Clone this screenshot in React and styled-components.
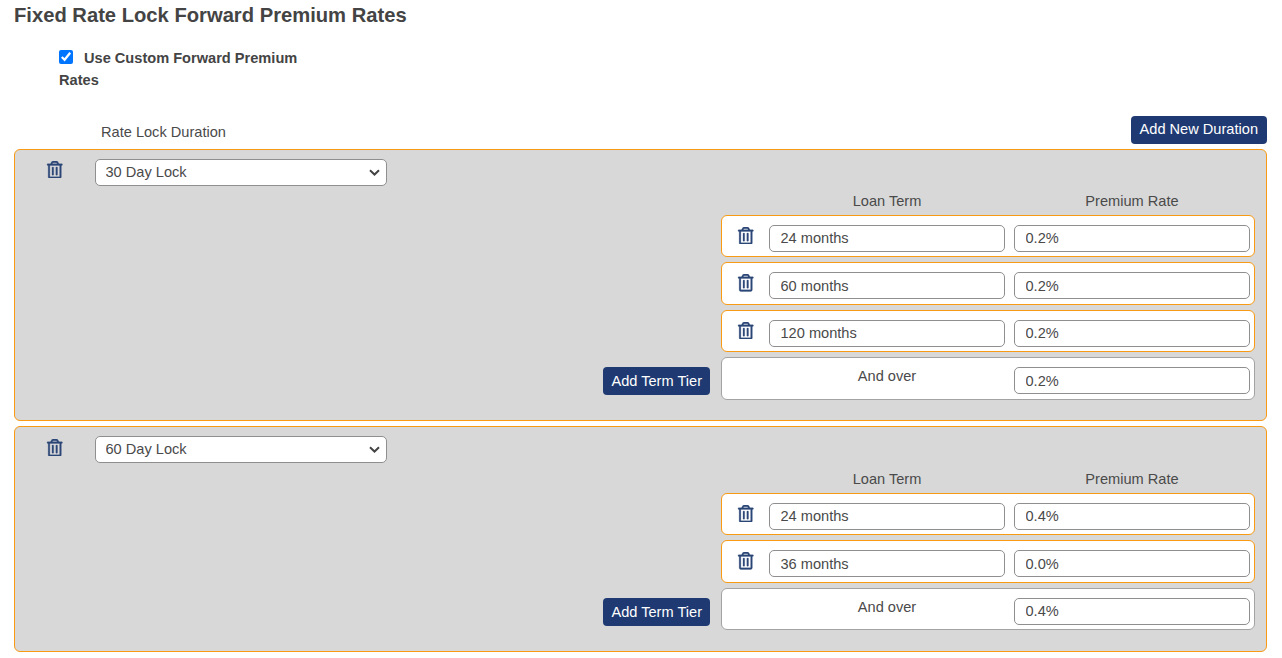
import React from "react";
import styled, { createGlobalStyle } from "styled-components";
import { FaRegTrashAlt } from "react-icons/fa";

const chevron = encodeURIComponent(
  '<svg xmlns="http://www.w3.org/2000/svg" width="11" height="7" viewBox="0 0 11 7"><path d="M1 1.2l4.5 4.3L10 1.2" fill="none" stroke="#444" stroke-width="2"/></svg>'
);

const GlobalStyle = createGlobalStyle`
  html, body {
    margin: 0;
    padding: 0;
    background: #fff;
    font-family: "Liberation Sans", Arial, sans-serif;
    font-size: 14.6px;
    color: #4a4a4a;
  }
`;

const Page = styled.div`
  padding: 0 15px 0 14px;
  height: 658px;
  box-sizing: border-box;
  overflow: hidden;
`;

const Title = styled.h2`
  margin: 0;
  padding-top: 5px;
  font-size: 20.2px;
  line-height: 21px;
  font-weight: bold;
  color: #444;
`;

const CustomLabel = styled.label`
  display: block;
  width: 250px;
  margin: 21px 0 0 45px;
  font-weight: bold;
  line-height: 22px;
  color: #444;
  input {
    width: 14px;
    height: 14px;
    margin: 0 11px 0 0;
    vertical-align: -1px;
  }
`;

const DurationHead = styled.div`
  display: flex;
  justify-content: space-between;
  align-items: flex-end;
  margin: 25px 0 5.4px;
  height: 28px;
  span {
    margin: 0 0 3px 87px;
    line-height: 17px;
  }
`;

const Button = styled.button`
  background: #1f3a72;
  color: #fff;
  border: none;
  border-radius: 4px;
  height: 28px;
  padding: 0 8px;
  font-family: inherit;
  font-size: 14.6px;
  white-space: nowrap;
  cursor: pointer;
`;

const AddDuration = styled(Button)`
  padding: 0 9px 2px;
`;

const Panel = styled.section`
  background: #d8d8d8;
  border: 1px solid #f89a14;
  border-radius: 6px;
  padding: 8.6px 11px 20.5px 0;
  & + & {
    margin-top: 5px;
  }
`;

const LockRow = styled.div`
  display: flex;
  align-items: flex-start;
`;

const Trash = styled.button`
  flex: none;
  height: 27px;
  padding: 2px 0 0;
  border: none;
  background: none;
  color: #2b4777;
  font-size: 17.5px;
  display: flex;
  box-sizing: border-box;
  cursor: pointer;
  svg {
    stroke-width: 8;
  }
`;

const LockTrash = styled(Trash)`
  width: 80px;
  justify-content: center;
  padding-top: ${(p) => p.$top}px;
`;

const LockSelect = styled.select`
  width: 292px;
  height: 27px;
  padding: 0 20px 0 9.5px;
  appearance: none;
  background: #fff url("data:image/svg+xml,${chevron}") no-repeat right 6px center;
  border: 1px solid #8f8f8f;
  border-radius: 5px;
  font-family: inherit;
  font-size: 14.6px;
  color: #4a4a4a;
`;

const TierArea = styled.div`
  display: flex;
  justify-content: flex-end;
  align-items: flex-end;
  gap: 11px;
`;

const TierColumn = styled.div`
  width: 534px;
`;

const TierHead = styled.div`
  display: grid;
  grid-template-columns: 38px 236px 236px;
  column-gap: 9px;
  align-items: end;
  height: ${(p) => p.$height}px;
  line-height: 16px;
  padding: 0 0 6px 1px;
  box-sizing: border-box;
  text-align: center;
  span:first-child {
    grid-column: 2;
  }
`;

const TierRows = styled.div`
  display: flex;
  flex-direction: column;
  gap: 5px;
`;

const TierRow = styled.div`
  display: grid;
  grid-template-columns: 38px 236px 236px;
  column-gap: 9px;
  align-items: start;
  height: 42.5px;
  padding-top: 9px;
  box-sizing: border-box;
  background: #fff;
  border: 1px solid ${(p) => (p.$last ? "#a3a3a3" : "#f89a14")};
  border-radius: 6px;
`;

const OverLabel = styled.div`
  grid-column: 2;
  text-align: center;
  line-height: 17px;
  margin-top: 1px;
`;

const TextField = styled.input`
  width: 236px;
  height: 27px;
  box-sizing: border-box;
  padding: 0 10.5px;
  border: 1px solid #8f8f8f;
  border-radius: 5px;
  background: #fff;
  font-family: inherit;
  font-size: 14.6px;
  color: #4a4a4a;
  grid-column: ${(p) => p.$col};
`;

const RowTrash = styled(Trash)`
  width: 38px;
  padding: 2px 0 0 15px;
`;

const AddTier = styled(Button)`
  margin-bottom: 4.5px;
`;

const durations = [
  {
    lock: "30 Day Lock",
    headHeight: 28.9,
    trashTop: 2,
    tiers: [
      ["24 months", "0.2%"],
      ["60 months", "0.2%"],
      ["120 months", "0.2%"],
    ],
    over: "0.2%",
  },
  {
    lock: "60 Day Lock",
    headHeight: 29.9,
    trashTop: 3,
    tiers: [
      ["24 months", "0.4%"],
      ["36 months", "0.0%"],
    ],
    over: "0.4%",
  },
];

const App = () => {
  return (
    <Page>
      <GlobalStyle />
      <Title>Fixed Rate Lock Forward Premium Rates</Title>
      <CustomLabel>
        <input type="checkbox" defaultChecked />
        Use Custom Forward Premium Rates
      </CustomLabel>
      <DurationHead>
        <span>Rate Lock Duration</span>
        <AddDuration>Add New Duration</AddDuration>
      </DurationHead>
      {durations.map((d) => (
        <Panel key={d.lock}>
          <LockRow>
            <LockTrash $top={d.trashTop} aria-label="Delete duration">
              <FaRegTrashAlt />
            </LockTrash>
            <LockSelect defaultValue={d.lock}>
              <option>30 Day Lock</option>
              <option>60 Day Lock</option>
              <option>90 Day Lock</option>
            </LockSelect>
          </LockRow>
          <TierArea>
            <AddTier>Add Term Tier</AddTier>
            <TierColumn>
              <TierHead $height={d.headHeight}>
                <span>Loan Term</span>
                <span>Premium Rate</span>
              </TierHead>
              <TierRows>
                {d.tiers.map(([term, rate]) => (
                  <TierRow key={term}>
                    <RowTrash aria-label="Delete tier">
                      <FaRegTrashAlt />
                    </RowTrash>
                    <TextField $col={2} defaultValue={term} />
                    <TextField $col={3} defaultValue={rate} />
                  </TierRow>
                ))}
                <TierRow $last>
                  <OverLabel>And over</OverLabel>
                  <TextField $col={3} defaultValue={d.over} />
                </TierRow>
              </TierRows>
            </TierColumn>
          </TierArea>
        </Panel>
      ))}
    </Page>
  );
};

export default App;
